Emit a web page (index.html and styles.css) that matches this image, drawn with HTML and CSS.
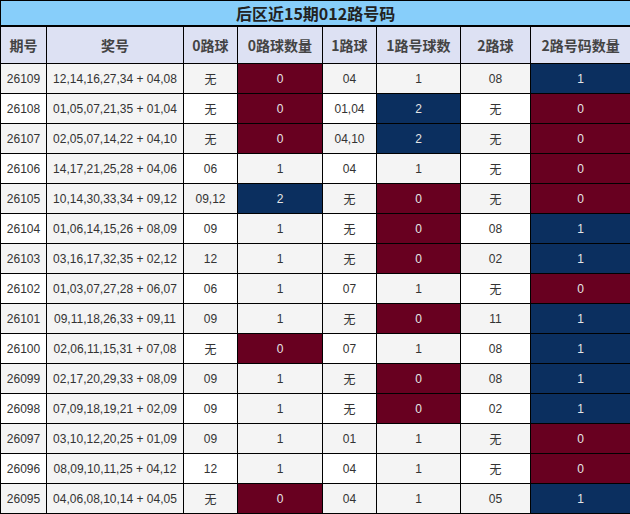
FILE: index.html
```html
<!DOCTYPE html>
<html lang="zh">
<head>
<meta charset="utf-8">
<title>后区近15期012路号码</title>
<link rel="stylesheet" href="styles.css">
</head>
<body>
<table class="grid">
  <colgroup>
    <col class="c1"><col class="c2"><col class="c3"><col class="c4"><col class="c5"><col class="c6"><col class="c7"><col class="c8">
  </colgroup>
  <thead>
    <tr class="title"><th colspan="8">后区近15期012路号码</th></tr>
    <tr class="head">
      <th>期号</th><th>奖号</th><th>0路球</th><th>0路球数量</th><th>1路球</th><th>1路号球数</th><th>2路球</th><th>2路号码数量</th>
    </tr>
  </thead>
  <tbody>
    <tr class="odd"><td>26109</td><td class="g">12,14,16,27,34 + 04,08</td><td>无</td><td class="red">0</td><td>04</td><td class="g">1</td><td>08</td><td class="blue">1</td></tr>
    <tr><td>26108</td><td class="g">01,05,07,21,35 + 01,04</td><td>无</td><td class="red">0</td><td>01,04</td><td class="blue">2</td><td>无</td><td class="red">0</td></tr>
    <tr class="odd"><td>26107</td><td class="g">02,05,07,14,22 + 04,10</td><td>无</td><td class="red">0</td><td>04,10</td><td class="blue">2</td><td>无</td><td class="red">0</td></tr>
    <tr><td>26106</td><td class="g">14,17,21,25,28 + 04,06</td><td>06</td><td class="g">1</td><td>04</td><td class="g">1</td><td>无</td><td class="red">0</td></tr>
    <tr class="odd"><td>26105</td><td class="g">10,14,30,33,34 + 09,12</td><td>09,12</td><td class="blue">2</td><td>无</td><td class="red">0</td><td>无</td><td class="red">0</td></tr>
    <tr><td>26104</td><td class="g">01,06,14,15,26 + 08,09</td><td>09</td><td class="g">1</td><td>无</td><td class="red">0</td><td>08</td><td class="blue">1</td></tr>
    <tr class="odd"><td>26103</td><td class="g">03,16,17,32,35 + 02,12</td><td>12</td><td class="g">1</td><td>无</td><td class="red">0</td><td>02</td><td class="blue">1</td></tr>
    <tr><td>26102</td><td class="g">01,03,07,27,28 + 06,07</td><td>06</td><td class="g">1</td><td>07</td><td class="g">1</td><td>无</td><td class="red">0</td></tr>
    <tr class="odd"><td>26101</td><td class="g">09,11,18,26,33 + 09,11</td><td>09</td><td class="g">1</td><td>无</td><td class="red">0</td><td>11</td><td class="blue">1</td></tr>
    <tr><td>26100</td><td class="g">02,06,11,15,31 + 07,08</td><td>无</td><td class="red">0</td><td>07</td><td class="g">1</td><td>08</td><td class="blue">1</td></tr>
    <tr class="odd"><td>26099</td><td class="g">02,17,20,29,33 + 08,09</td><td>09</td><td class="g">1</td><td>无</td><td class="red">0</td><td>08</td><td class="blue">1</td></tr>
    <tr><td>26098</td><td class="g">07,09,18,19,21 + 02,09</td><td>09</td><td class="g">1</td><td>无</td><td class="red">0</td><td>02</td><td class="blue">1</td></tr>
    <tr class="odd"><td>26097</td><td class="g">03,10,12,20,25 + 01,09</td><td>09</td><td class="g">1</td><td>01</td><td class="g">1</td><td>无</td><td class="red">0</td></tr>
    <tr><td>26096</td><td class="g">08,09,10,11,25 + 04,12</td><td>12</td><td class="g">1</td><td>04</td><td class="g">1</td><td>无</td><td class="red">0</td></tr>
    <tr class="odd"><td>26095</td><td class="g">04,06,08,10,14 + 04,05</td><td>无</td><td class="red">0</td><td>04</td><td class="g">1</td><td>05</td><td class="blue">1</td></tr>
  </tbody>
</table>
</body>
</html>
```

FILE: styles.css
```css
html, body {
  margin: 0;
  padding: 0;
  background: #ffffff;
}

.grid {
  width: 630px;
  table-layout: fixed;
  border-collapse: collapse;
  font-family: "Liberation Sans", Arial, "Noto Sans CJK SC", sans-serif;
  font-size: 12px;
  color: #333333;
}

.c1 { width: 46px; }
.c2 { width: 137px; }
.c3 { width: 54px; }
.c4 { width: 85px; }
.c5 { width: 54px; }
.c6 { width: 84px; }
.c7 { width: 70px; }
.c8 { width: 100px; }

.grid th,
.grid td {
  border: 1px solid #000000;
  padding: 0;
  text-align: center;
  white-space: nowrap;
}

.title th {
  height: 24px;
  background: #87cefa;
  border-bottom-width: 2px;
  font-family: "Noto Sans CJK SC", sans-serif;
  font-size: 16px;
  font-weight: bold;
  color: #222222;
  line-height: 24px;
}

.head th {
  height: 36px;
  background: #dde1f3;
  font-family: "Noto Sans CJK SC", sans-serif;
  font-size: 14px;
  font-weight: bold;
  color: #444444;
}

.grid td {
  height: 29px;
  background: #ffffff;
}

.grid tr.odd td,
.grid td.g {
  background: #f4f4f4;
}

.grid td.red,
.grid tr.odd td.red {
  background: #680020;
  color: #e6e6e6;
}

.grid td.blue,
.grid tr.odd td.blue {
  background: #0b2f5f;
  color: #e6e6e6;
}
```
